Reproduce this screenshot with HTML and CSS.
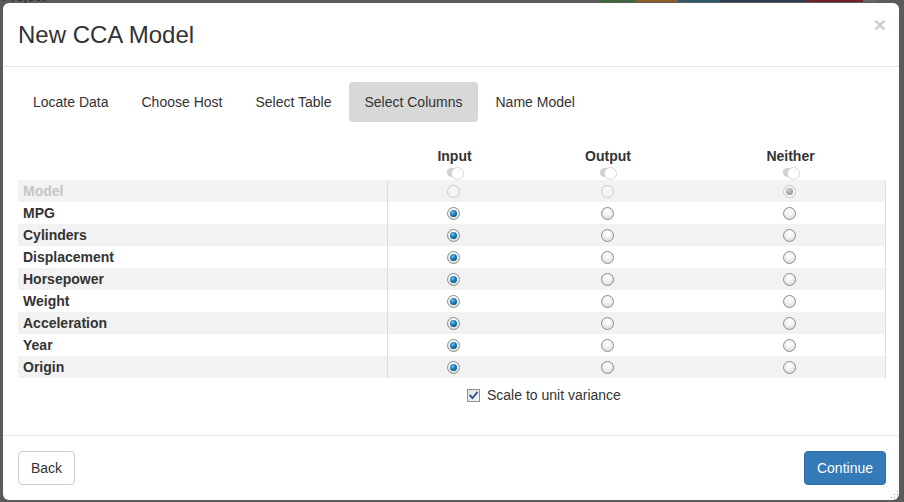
FILE: index.html
```html
<!DOCTYPE html>
<html lang="en">
<head>
<meta charset="utf-8">
<title>New CCA Model</title>
<link rel="stylesheet" href="styles.css">
</head>
<body>
<div class="backdrop-strip">
  <span class="bg-text">Project</span>
  <span class="seg seg-green"></span>
  <span class="seg seg-orange"></span>
  <span class="seg seg-teal"></span>
  <span class="seg seg-navy"></span>
  <span class="seg seg-red"></span>
  <span class="seg seg-grey"></span>
</div>
<div class="modal">
  <div class="modal-header">
    <h4 class="modal-title">New CCA Model</h4>
    <button class="close" type="button">&times;</button>
  </div>
  <div class="modal-body">
    <ul class="nav-pills">
      <li><a>Locate Data</a></li>
      <li><a>Choose Host</a></li>
      <li><a>Select Table</a></li>
      <li class="active"><a>Select Columns</a></li>
      <li><a>Name Model</a></li>
    </ul>

    <div class="col-table">
      <div class="trow head">
        <div class="cell label"></div>
        <div class="cell"><span class="col-title">Input</span><span class="toggle"></span></div>
        <div class="cell"><span class="col-title">Output</span><span class="toggle"></span></div>
        <div class="cell"><span class="col-title">Neither</span><span class="toggle"></span></div>
      </div>
      <div class="trow body-row striped disabled">
        <div class="cell label">Model</div>
        <div class="cell"><input class="radio" type="radio" name="r0" disabled></div>
        <div class="cell"><input class="radio" type="radio" name="r0" disabled></div>
        <div class="cell"><input class="radio" type="radio" name="r0" disabled checked></div>
      </div>
      <div class="trow body-row">
        <div class="cell label">MPG</div>
        <div class="cell"><input class="radio" type="radio" name="r1" checked></div>
        <div class="cell"><input class="radio" type="radio" name="r1"></div>
        <div class="cell"><input class="radio" type="radio" name="r1"></div>
      </div>
      <div class="trow body-row striped">
        <div class="cell label">Cylinders</div>
        <div class="cell"><input class="radio" type="radio" name="r2" checked></div>
        <div class="cell"><input class="radio" type="radio" name="r2"></div>
        <div class="cell"><input class="radio" type="radio" name="r2"></div>
      </div>
      <div class="trow body-row">
        <div class="cell label">Displacement</div>
        <div class="cell"><input class="radio" type="radio" name="r3" checked></div>
        <div class="cell"><input class="radio" type="radio" name="r3"></div>
        <div class="cell"><input class="radio" type="radio" name="r3"></div>
      </div>
      <div class="trow body-row striped">
        <div class="cell label">Horsepower</div>
        <div class="cell"><input class="radio" type="radio" name="r4" checked></div>
        <div class="cell"><input class="radio" type="radio" name="r4"></div>
        <div class="cell"><input class="radio" type="radio" name="r4"></div>
      </div>
      <div class="trow body-row">
        <div class="cell label">Weight</div>
        <div class="cell"><input class="radio" type="radio" name="r5" checked></div>
        <div class="cell"><input class="radio" type="radio" name="r5"></div>
        <div class="cell"><input class="radio" type="radio" name="r5"></div>
      </div>
      <div class="trow body-row striped">
        <div class="cell label">Acceleration</div>
        <div class="cell"><input class="radio" type="radio" name="r6" checked></div>
        <div class="cell"><input class="radio" type="radio" name="r6"></div>
        <div class="cell"><input class="radio" type="radio" name="r6"></div>
      </div>
      <div class="trow body-row">
        <div class="cell label">Year</div>
        <div class="cell"><input class="radio" type="radio" name="r7" checked></div>
        <div class="cell"><input class="radio" type="radio" name="r7"></div>
        <div class="cell"><input class="radio" type="radio" name="r7"></div>
      </div>
      <div class="trow body-row striped">
        <div class="cell label">Origin</div>
        <div class="cell"><input class="radio" type="radio" name="r8" checked></div>
        <div class="cell"><input class="radio" type="radio" name="r8"></div>
        <div class="cell"><input class="radio" type="radio" name="r8"></div>
      </div>
    </div>

    <label class="scale-row">
      <span class="chk"><svg width="11" height="11" viewBox="0 0 11 11"><path d="M2.2 5.6 L4.4 8.2 L9 2.6" fill="none" stroke="#34488a" stroke-width="1.8" stroke-linecap="square"/></svg></span>
      <span class="scale-text">Scale to unit variance</span>
    </label>
  </div>
  <div class="modal-footer">
    <button class="btn btn-default" type="button">Back</button>
    <button class="btn btn-primary" type="button">Continue</button>
  </div>
  <svg class="grip" width="9" height="9" viewBox="0 0 9 9">
    <rect x="7" y="1" width="1" height="1" fill="#9a9a9a"/>
    <rect x="4" y="4" width="1" height="1" fill="#9a9a9a"/>
    <rect x="7" y="4" width="1" height="1" fill="#9a9a9a"/>
    <rect x="1" y="7" width="1" height="1" fill="#9a9a9a"/>
    <rect x="4" y="7" width="1" height="1" fill="#9a9a9a"/>
    <rect x="7" y="7" width="1" height="1" fill="#9a9a9a"/>
  </svg>
</div>
</body>
</html>
```
FILE: styles.css
```css
* { box-sizing: border-box; }
html, body { margin: 0; padding: 0; }
body {
  background: #5b5b5b;
  font-family: "Liberation Sans", Arial, sans-serif;
  font-size: 14px;
  line-height: 20px;
  color: #333;
  width: 904px;
  height: 502px;
  overflow: hidden;
}

.backdrop-strip {
  display: flex;
  align-items: flex-start;
  height: 3px;
  overflow: hidden;
}
.bg-text {
  width: 600px;
  flex: none;
  font-size: 14px;
  line-height: 14px;
  margin-top: -11px;
  padding-left: 2px;
  color: #3a2626;
}
.seg { height: 2px; flex: none; }
.seg-green { width: 35px; background: #3c673a; }
.seg-orange { width: 43px; background: #8a5e24; }
.seg-teal { width: 42px; background: #2c5a6c; }
.seg-navy { width: 85px; background: #2e3e55; }
.seg-red { width: 58px; background: #6b2323; }
.seg-grey { width: 15px; background: #666; }

.modal {
  position: relative;
  margin-left: 3px;
  width: 896px;
  background: #fff;
  border-radius: 6px;
}

.modal-header {
  display: flex;
  justify-content: space-between;
  align-items: flex-start;
  padding: 15px 13px 15px 15px;
  border-bottom: 1px solid #e5e5e5;
}
.modal-title {
  margin: 0;
  font-size: 24px;
  line-height: 33px;
  font-weight: normal;
  color: #333;
}
.close {
  margin-top: -4px;
  padding: 0;
  border: 0;
  background: transparent;
  font-family: "Liberation Sans", Arial, sans-serif;
  font-size: 21px;
  font-weight: bold;
  line-height: 1;
  color: #000;
  opacity: 0.2;
}

.modal-body {
  padding: 15px 13px 30px 15px;
}

.nav-pills {
  display: flex;
  list-style: none;
  margin: 0;
  padding: 0;
}
.nav-pills li + li { margin-left: 3px; }
.nav-pills a {
  display: block;
  padding: 10px 15px;
  line-height: 20px;
  color: #333;
  border-radius: 4px;
}
.nav-pills .active a { background: #d8d8d8; }

.col-table { margin-top: 22px; }
.trow {
  display: grid;
  grid-template-columns: 370px 133px 174px 191px;
}
.cell {
  display: flex;
  align-items: center;
  justify-content: center;
}
.head .cell {
  flex-direction: column;
  justify-content: flex-start;
  padding-top: 2px;
  padding-bottom: 3px;
  height: 36px;
}
.col-title {
  font-weight: bold;
  line-height: 20px;
}
.toggle {
  position: relative;
  margin-top: 2px;
  width: 16px;
  height: 9px;
  border-radius: 5px;
  background: #cfcfcf;
}
.toggle::after {
  content: "";
  position: absolute;
  right: -1px;
  top: -1px;
  width: 11px;
  height: 11px;
  border-radius: 50%;
  background: #fff;
  border: 1px solid #dadada;
}

.body-row { height: 22px; }
.body-row .cell { line-height: 22px; }
.body-row .cell:last-child { border-right: 1px solid #dddddd; }
.body-row .label {
  justify-content: flex-start;
  padding-left: 5px;
  font-weight: bold;
  color: #333;
  border-right: 1px solid #dddddd;
}
.striped { background: #f2f2f2; }
.disabled .label { color: #c6c6c6; }

.radio {
  -webkit-appearance: none;
  appearance: none;
  position: relative;
  width: 13px;
  height: 13px;
  margin: 0 0 0 -2px;
  border-radius: 50%;
  border: 1px solid #8c8c8c;
  background: radial-gradient(circle at 50% 30%, #ffffff 0, #f1f1f1 45%, #d2d2d2 100%);
}
.radio:checked::after {
  content: "";
  position: absolute;
  left: 2px;
  top: 2px;
  width: 7px;
  height: 7px;
  border-radius: 50%;
  background: radial-gradient(circle at 40% 35%, #6cc6f2 0, #1877b3 45%, #0a3a62 100%);
}
.radio:disabled {
  border-color: #c9c9c9;
  background: #f4f4f4;
}
.radio:disabled:checked::after {
  background: radial-gradient(circle at 40% 35%, #d0d0d0 0, #a2a2a2 60%, #8e8e8e 100%);
}

.scale-row {
  display: flex;
  align-items: center;
  margin-top: 7px;
  padding-left: 449px;
  line-height: 20px;
}
.chk {
  display: flex;
  align-items: center;
  justify-content: center;
  width: 13px;
  height: 13px;
  border: 1px solid #8e8f92;
  background: linear-gradient(135deg, #dde3ea 0, #f6f8fa 100%);
  margin-right: 7px;
}
.chk svg { display: block; }
.scale-text { color: #333; }

.modal-footer {
  display: flex;
  justify-content: space-between;
  padding: 15px 13px 15px 15px;
  border-top: 1px solid #e5e5e5;
}
.btn {
  font-family: "Liberation Sans", Arial, sans-serif;
  font-size: 14px;
  line-height: 20px;
  padding: 6px 12px;
  border: 1px solid transparent;
  border-radius: 4px;
}
.btn-default {
  background: #fff;
  border-color: #ccc;
  color: #333;
}
.btn-primary {
  background: #337ab7;
  border-color: #2e6da4;
  color: #fff;
}

.grip {
  position: absolute;
  right: 0;
  bottom: 1px;
}
```
